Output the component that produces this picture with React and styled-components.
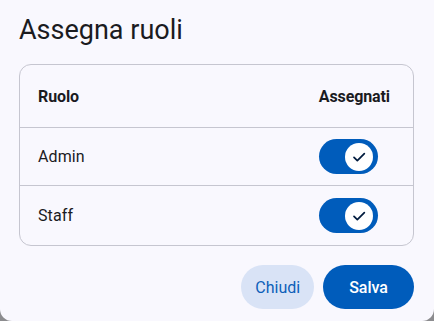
import styled, { createGlobalStyle } from "styled-components";

const GlobalStyle = createGlobalStyle`
	html, body {
		margin: 0;
		padding: 0;
		background: #8c8c8f;
		font-family: Roboto, "Liberation Sans", sans-serif;
	}
`;

const ROLES = [
	{ id: 1, name: 'Admin', assigned: true },
	{ id: 2, name: 'Staff', assigned: true },
];

const Dialog = styled.div`
	width: 434px;
	height: 321px;
	box-sizing: border-box;
	background: #f9f8fe;
	border-radius: 0 0 12px 12px;
	padding: 14px 20px 0 19px;
	display: flex;
	flex-direction: column;
`;

const Title = styled.h2`
	margin: 0 0 18px 0;
	font-size: 27px;
	line-height: 32px;
	font-weight: 400;
	color: #1b1b1f;
`;

const Card = styled.div`
	border: 1px solid #c6c6d0;
	border-radius: 12px;
	display: flex;
	flex-direction: column;
`;

const Row = styled.div`
	display: flex;
	align-items: center;
	justify-content: space-between;
	box-sizing: border-box;
	height: ${props => props.$height}px;
	padding: 0 23px 0 18px;
	border-bottom: ${props => props.$last ? 'none' : '1px solid #c6c6d0'};
	color: #1b1b1f;
`;

const HeadCell = styled.span`
	font-size: 16px;
	font-weight: 700;
	letter-spacing: -0.1px;
`;

const Cell = styled.span`
	font-size: 16px;
	letter-spacing: 0.1px;
`;

const Track = styled.span`
	width: 59px;
	height: 35px;
	margin-right: 12px;
	border-radius: 18px;
	background: ${props => props.$on ? '#005cbb' : '#e1e2ec'};
	display: flex;
	align-items: center;
	justify-content: ${props => props.$on ? 'flex-end' : 'flex-start'};
	padding: 0 5px;
	box-sizing: border-box;
`;

const Thumb = styled.span`
	width: 28px;
	height: 28px;
	border-radius: 50%;
	background: #ffffff;
	display: flex;
	align-items: center;
	justify-content: center;
`;

const Actions = styled.div`
	display: flex;
	justify-content: flex-end;
	gap: 9px;
	margin-top: 19px;
`;

const Button = styled.button`
	height: 44px;
	border: none;
	border-radius: 22px;
	padding: 0 ${props => props.$pad}px;
	font-family: Roboto, "Liberation Sans", sans-serif;
	font-size: 16px;
	font-weight: ${props => props.$primary ? 500 : 400};
	background: ${props => props.$primary ? '#005cbb' : '#d9e3f6'};
	color: ${props => props.$primary ? '#ffffff' : '#0d5fb9'};
	cursor: pointer;
`;

function Switch({ on }) {
	return (
		<Track $on={on}>
			<Thumb>
				{on && (
					<svg width="16" height="16" viewBox="0 0 24 24">
						<path d="M4.5 12.5l5 5L20 7" fill="none" stroke="#001b3e" strokeWidth="2.6" strokeLinecap="round" strokeLinejoin="round" />
					</svg>
				)}
			</Thumb>
		</Track>
	);
}

export default function App() {
	return (
		<>
			<GlobalStyle />
			<Dialog>
				<Title>Assegna ruoli</Title>
				<Card>
					<Row $height={63}>
						<HeadCell>Ruolo</HeadCell>
						<HeadCell>Assegnati</HeadCell>
					</Row>
					{ROLES.map((role, i) => {
						const last = i === ROLES.length - 1;
						return (
							<Row key={role.id} $height={last ? 59 : 58} $last={last}>
								<Cell>{role.name}</Cell>
								<Switch on={role.assigned} />
							</Row>
						);
					})}
				</Card>
				<Actions>
					<Button $pad={14}>Chiudi</Button>
					<Button $pad={26} $primary>Salva</Button>
				</Actions>
			</Dialog>
		</>
	);
}
